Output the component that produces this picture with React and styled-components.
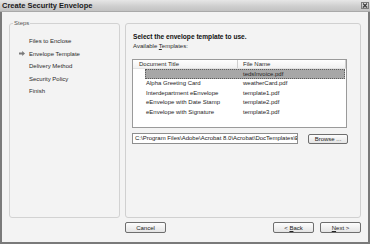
import styled, { createGlobalStyle, css } from "styled-components";

const GlobalStyle = createGlobalStyle`
  html, body {
    margin: 0;
    padding: 0;
    background: #f3f3f3;
  }
  body {
    font-family: "Liberation Sans", Arial, sans-serif;
    color: #1e1e1e;
  }
  * {
    box-sizing: border-box;
  }
`;

const steps = [
  { id: 1, text: "Files to Enclose" },
  { id: 2, text: "Envelope Template", current: true },
  { id: 3, text: "Delivery Method" },
  { id: 4, text: "Security Policy" },
  { id: 5, text: "Finish" },
];

const templates = [
  { id: 1, title: "", file: "tedsInvoice.pdf", selected: true },
  { id: 2, title: "Alpha Greeting Card", file: "weatherCard.pdf" },
  { id: 3, title: "Interdepartment eEnvelope", file: "template1.pdf" },
  { id: 4, title: "eEnvelope with Date Stamp", file: "template2.pdf" },
  { id: 5, title: "eEnvelope with Signature", file: "template3.pdf" },
];

function StepArrow() {
  return (
    <svg width="6" height="5" viewBox="0 0 6 5">
      <path d="M0 1.6h3.2V0L6 2.5 3.2 5V3.4H0z" fill="#7a7a7a" />
    </svg>
  );
}

function CloseIcon() {
  return (
    <svg width="6" height="5" viewBox="0 0 6 5">
      <path d="M1 0.5l4 4M5 0.5l-4 4" stroke="#3a3a3a" strokeWidth="1.1" />
    </svg>
  );
}

export default function App() {
  return (
    <>
      <GlobalStyle />
      <Window>
        <TitleBar>
          <Title>Create Security Envelope</Title>
          <CloseButton>
            <CloseIcon />
          </CloseButton>
        </TitleBar>
        <Frame>
          <StepsBox>
            <StepsLegend>Steps</StepsLegend>
            <StepList>
              {steps.map((step) => (
                <Step key={step.id}>
                  <Marker>{step.current && <StepArrow />}</Marker>
                  {step.text}
                </Step>
              ))}
            </StepList>
          </StepsBox>

          <Panel>
            <Heading>Select the envelope template to use.</Heading>
            <Label>
              Available <u>T</u>emplates:
            </Label>
            <ListBox>
              <ListHeader>
                <HeaderCell width={105} pad={6}>
                  Document Title
                </HeaderCell>
                <HeaderCell width={108} pad={5}>
                  File Name
                </HeaderCell>
              </ListHeader>
              <Rows>
                {templates.map((item) => (
                  <Row key={item.id} selected={item.selected}>
                    <Cell>{item.title}</Cell>
                    <Cell>{item.file}</Cell>
                  </Row>
                ))}
              </Rows>
            </ListBox>
            <PathRow>
              <PathField>
                C:\Program Files\Adobe\Acrobat 8.0\Acrobat\DocTemplates\ENU\
              </PathField>
              <Button width={40} height={10}>
                Browse ...
              </Button>
            </PathRow>
          </Panel>

          <Footer>
            <Button>Cancel</Button>
            <Spacer />
            <Button>
              &lt; <u>B</u>ack
            </Button>
            <Button>
              <u>N</u>ext &gt;
            </Button>
          </Footer>
        </Frame>
      </Window>
    </>
  );
}

const Window = styled.div`
  width: 370px;
  height: 244px;
  display: flex;
  flex-direction: column;
  background: #f3f3f3;
`;

const TitleBar = styled.div`
  height: 12px;
  display: flex;
  align-items: center;
  justify-content: space-between;
  padding: 0 1px 0 2px;
  background: linear-gradient(#e6e6e6, #cdcdcd 60%, #c2c2c2);
  border-bottom: 1px solid #a9a9a9;
`;

const Title = styled.span`
  font-size: 7.5px;
  font-weight: bold;
  line-height: 10px;
  color: #1a1a1a;
`;

const CloseButton = styled.span`
  width: 8px;
  height: 7px;
  display: flex;
  align-items: center;
  justify-content: center;
  border: 1px solid #7e7e7e;
  background: linear-gradient(#e8e8e8, #b9b9b9);
`;

const Frame = styled.div`
  flex: 1;
  display: grid;
  grid-template-columns: 111px 236px;
  grid-template-rows: auto auto;
  column-gap: 5px;
  align-content: start;
  padding: 7px 0 0 7px;
  border: 2px solid #7a7a7a;
  border-top: none;
`;

const StepsBox = styled.fieldset`
  margin: 0;
  padding: 0;
  min-width: 0;
  height: 199px;
  border: 1px solid #d2d2d2;
  border-radius: 3px;
`;

const StepsLegend = styled.legend`
  margin-left: 3px;
  padding: 0 1px;
  font-size: 6px;
  line-height: 8px;
  color: #555;
`;

const StepList = styled.ul`
  margin: 0;
  padding: 8px 0 0 9px;
  list-style: none;
`;

const Step = styled.li`
  height: 12.5px;
  display: flex;
  align-items: center;
  font-size: 6px;
  color: #2a2a2a;
`;

const Marker = styled.span`
  width: 10px;
  display: flex;
  align-items: center;
`;

const Panel = styled.section`
  margin-top: 4px;
  height: 195px;
  display: flex;
  flex-direction: column;
  align-items: flex-start;
  padding: 9px 0 0 7px;
  border: 1px solid #d0d0d0;
  border-radius: 3px;
`;

const Heading = styled.div`
  font-size: 6.6px;
  font-weight: bold;
  line-height: 8px;
  color: #111;
`;

const Label = styled.div`
  margin-top: 1px;
  font-size: 6px;
  line-height: 8px;
  color: #2a2a2a;
`;

const ListBox = styled.div`
  margin: 9px 0 0 -1px;
  width: 215px;
  height: 69px;
  border: 1px solid #9a9a9a;
  background: #fff;
`;

const ListHeader = styled.div`
  display: flex;
  height: 9px;
  background: linear-gradient(#ffffff, #f1f1f1);
  border-bottom: 1px solid #e2e2e2;
`;

const HeaderCell = styled.div`
  width: ${({ width }) => width}px;
  padding-left: ${({ pad }) => pad}px;
  border-right: 1px solid #cfcfcf;
  font-size: 6px;
  line-height: 8px;
  color: #2a2a2a;
`;

const Rows = styled.div`
  padding-left: 12px;
`;

const Row = styled.div`
  width: 200px;
  height: 9.5px;
  display: grid;
  grid-template-columns: 97px 1fr;
  align-items: center;
  font-size: 6px;
  color: #1e1e1e;
  ${({ selected }) =>
    selected &&
    css`
      background: #a7a7a7;
      outline: 1px dotted #5e5e5e;
      outline-offset: -1px;
    `}
`;

const Cell = styled.span`
  padding-left: 1px;
  white-space: nowrap;
  overflow: hidden;
`;

const PathRow = styled.div`
  margin: 5px 0 0 -1px;
  display: flex;
  align-items: center;
  gap: 10px;
`;

const PathField = styled.div`
  width: 166px;
  height: 11px;
  padding-left: 2px;
  border: 1px solid #8e8e8e;
  background: #fff;
  font-size: 6px;
  line-height: 9px;
  white-space: nowrap;
  overflow: hidden;
  color: #222;
`;

const Footer = styled.div`
  grid-column: 2;
  margin-top: 4px;
  display: flex;
  gap: 6px;
`;

const Spacer = styled.span`
  flex: 1;
`;

const Button = styled.button`
  width: ${({ width }) => width || 41}px;
  height: ${({ height }) => height || 11}px;
  padding: 0;
  border: 1px solid #6e6e6e;
  border-radius: 2px;
  background: linear-gradient(#fdfdfd, #e4e4e4);
  font-family: "Liberation Sans", Arial, sans-serif;
  font-size: 6px;
  line-height: 8px;
  color: #222;
`;
